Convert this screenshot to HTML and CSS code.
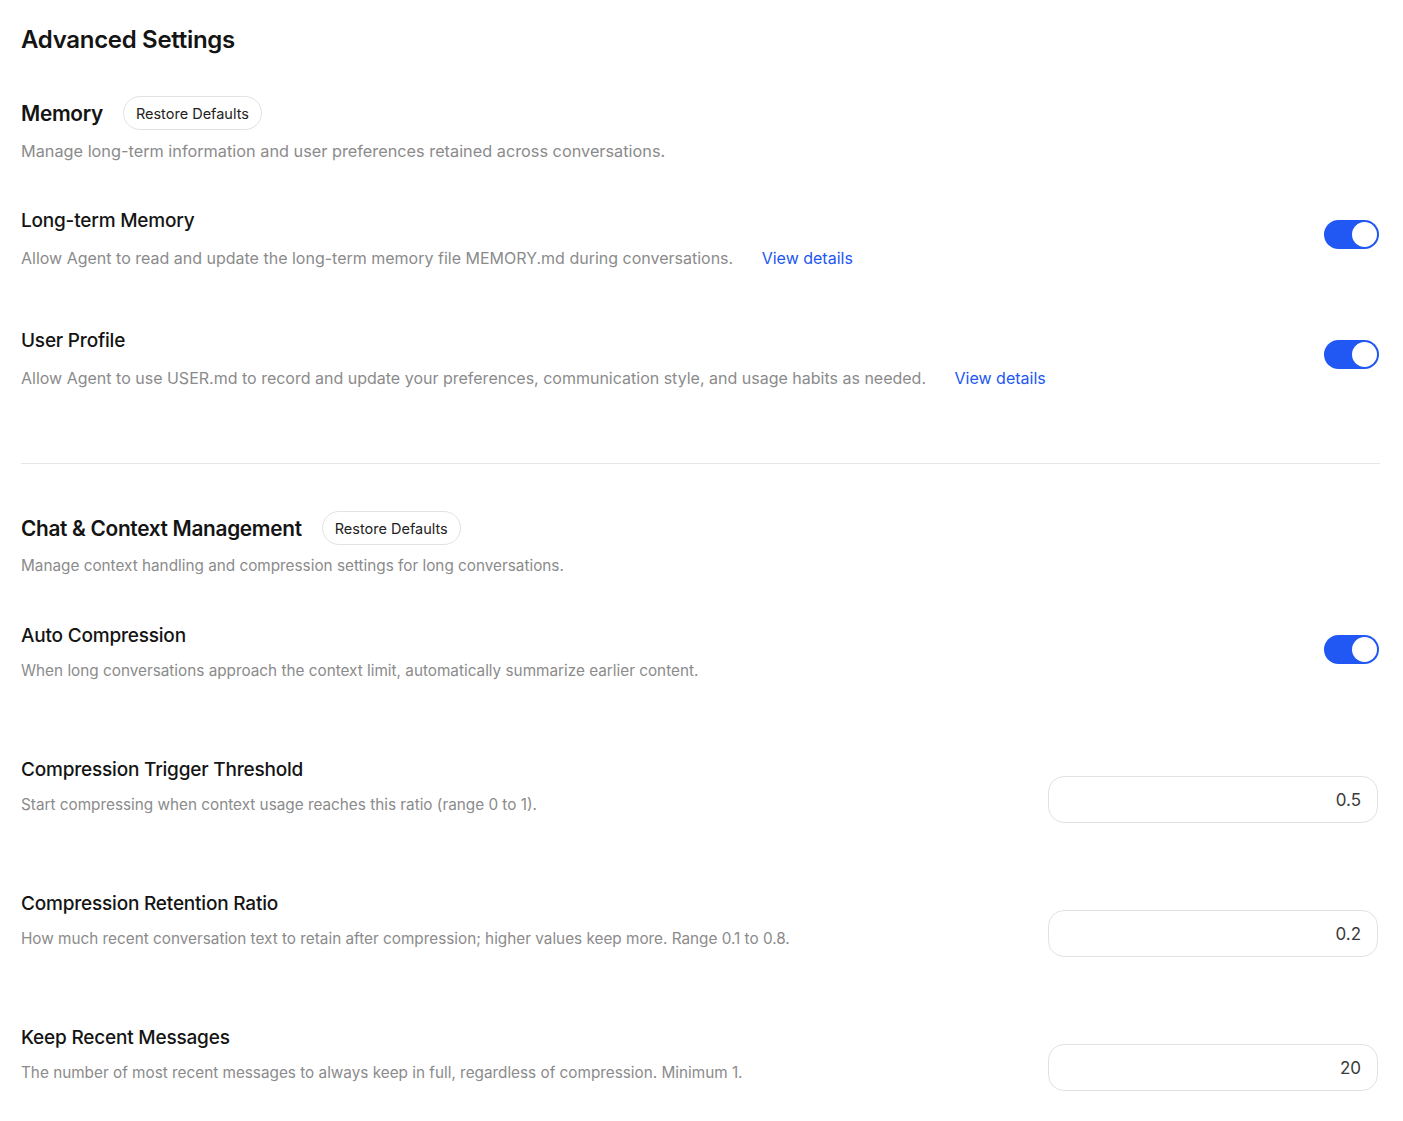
FILE: index.html
```html
<!DOCTYPE html>
<html lang="en">
<head>
    <meta charset="UTF-8">
    <title>Advanced Settings</title>
    <link rel="stylesheet" href="styles.css">
</head>
<body>
    <div class="settings-page">
        <h1 class="page-title">Advanced Settings</h1>

        <!-- Memory -->
        <section class="settings-section">
            <div class="section-head">
                <h2>Memory</h2>
                <button class="restore-btn">Restore Defaults</button>
            </div>
            <p class="section-desc">Manage long-term information and user preferences retained across conversations.</p>

            <div class="settings-list">
                <div class="setting-row">
                    <div class="setting-text">
                        <div class="setting-label">Long-term Memory</div>
                        <div class="setting-desc">Allow Agent to read and update the long-term memory file MEMORY.md during conversations. <a href="#" class="details-link">View details</a></div>
                    </div>
                    <label class="switch"><input type="checkbox" checked><span class="slider"></span></label>
                </div>
                <div class="setting-row">
                    <div class="setting-text">
                        <div class="setting-label">User Profile</div>
                        <div class="setting-desc">Allow Agent to use USER.md to record and update your preferences, communication style, and usage habits as needed. <a href="#" class="details-link">View details</a></div>
                    </div>
                    <label class="switch"><input type="checkbox" checked><span class="slider"></span></label>
                </div>
            </div>
        </section>

        <hr class="divider">

        <!-- Chat & Context -->
        <section class="settings-section settings-section--compact">
            <div class="section-head">
                <h2>Chat &amp; Context Management</h2>
                <button class="restore-btn">Restore Defaults</button>
            </div>
            <p class="section-desc">Manage context handling and compression settings for long conversations.</p>

            <div class="settings-list settings-list--roomy">
                <div class="setting-row">
                    <div class="setting-text">
                        <div class="setting-label">Auto Compression</div>
                        <div class="setting-desc">When long conversations approach the context limit, automatically summarize earlier content.</div>
                    </div>
                    <label class="switch"><input type="checkbox" checked><span class="slider"></span></label>
                </div>
                <div class="setting-row">
                    <div class="setting-text">
                        <div class="setting-label">Compression Trigger Threshold</div>
                        <div class="setting-desc">Start compressing when context usage reaches this ratio (range 0 to 1).</div>
                    </div>
                    <input type="text" class="num-input" value="0.5">
                </div>
                <div class="setting-row">
                    <div class="setting-text">
                        <div class="setting-label">Compression Retention Ratio</div>
                        <div class="setting-desc">How much recent conversation text to retain after compression; higher values keep more. Range 0.1 to 0.8.</div>
                    </div>
                    <input type="text" class="num-input" value="0.2">
                </div>
                <div class="setting-row">
                    <div class="setting-text">
                        <div class="setting-label">Keep Recent Messages</div>
                        <div class="setting-desc">The number of most recent messages to always keep in full, regardless of compression. Minimum 1.</div>
                    </div>
                    <input type="text" class="num-input" value="20">
                </div>
            </div>
        </section>
    </div>
</body>
</html>
```

FILE: styles.css
```css
:root {
    --text-color: #141414;
    --muted-color: #8b8b8b;
    --accent-color: #2157f2;
    --border-color: #e2e2e2;
}

body, html {
    margin: 0;
    padding: 0;
    background: #fff;
    font-family: Inter, 'Noto Sans', Arial, sans-serif;
    color: var(--text-color);
}

.settings-page {
    padding: 24px 23px 30px 21px;
}

.page-title {
    margin: 0 0 40px;
    font-size: 24px;
    line-height: 32px;
    font-weight: 600;
    letter-spacing: -0.3px;
}

.section-head {
    display: flex;
    align-items: center;
    gap: 20px;
    height: 34px;
}
.section-head h2 {
    margin: 0;
    font-size: 20.8px;
    font-weight: 600;
    letter-spacing: -0.3px;
}
.restore-btn {
    height: 34px;
    padding: 0 12px;
    border: 1px solid var(--border-color);
    border-radius: 17px;
    background: #fff;
    font-family: inherit;
    font-size: 14.5px;
    color: #222;
    cursor: pointer;
}

.section-desc {
    margin: 9px 0 0;
    font-size: 16.3px;
    line-height: 24px;
    color: var(--muted-color);
}

.settings-list {
    display: flex;
    flex-direction: column;
    gap: 54px;
    margin-top: 45px;
}
.settings-list--roomy {
    gap: 68px;
}

.setting-row {
    display: flex;
    justify-content: space-between;
    align-items: flex-start;
    min-height: 66px;
}
.setting-label {
    font-size: 19px;
    line-height: 26px;
    font-weight: 500;
    letter-spacing: -0.2px;
}
.setting-desc {
    margin-top: 12px;
    font-size: 16px;
    line-height: 24px;
    color: var(--muted-color);
}
.details-link {
    margin-left: 24px;
    color: var(--accent-color);
    text-decoration: none;
}

/* second block uses a slightly tighter description text */
.settings-section--compact .section-desc,
.settings-section--compact .setting-desc {
    font-size: 15.3px;
}
.settings-section--compact .setting-desc {
    margin-top: 10px;
}

/* toggle switch */
.switch {
    position: relative;
    flex-shrink: 0;
    width: 55px;
    height: 29px;
    margin-top: 12px;
    margin-right: 1px;
}
.switch input {
    display: none;
}
.slider {
    position: absolute;
    inset: 0;
    border-radius: 15px;
    background: #d0d0d0;
    cursor: pointer;
    transition: background 0.2s ease;
}
.slider::after {
    content: '';
    position: absolute;
    top: 2px;
    left: 2px;
    width: 25px;
    height: 25px;
    border-radius: 50%;
    background: #fff;
    transition: transform 0.2s ease;
}
.switch input:checked + .slider {
    background: var(--accent-color);
}
.switch input:checked + .slider::after {
    transform: translateX(26px);
}

.num-input {
    flex-shrink: 0;
    box-sizing: border-box;
    width: 330px;
    height: 47px;
    margin-top: 19px;
    margin-right: 2px;
    padding: 0 16px;
    border: 1px solid var(--border-color);
    border-radius: 16px;
    background: #fff;
    font-family: inherit;
    font-size: 17px;
    color: #3a3a3a;
    text-align: right;
    outline: none;
}

.divider {
    margin: 69px 0 47px;
    border: none;
    border-top: 1px solid #e6e6e6;
}
```
